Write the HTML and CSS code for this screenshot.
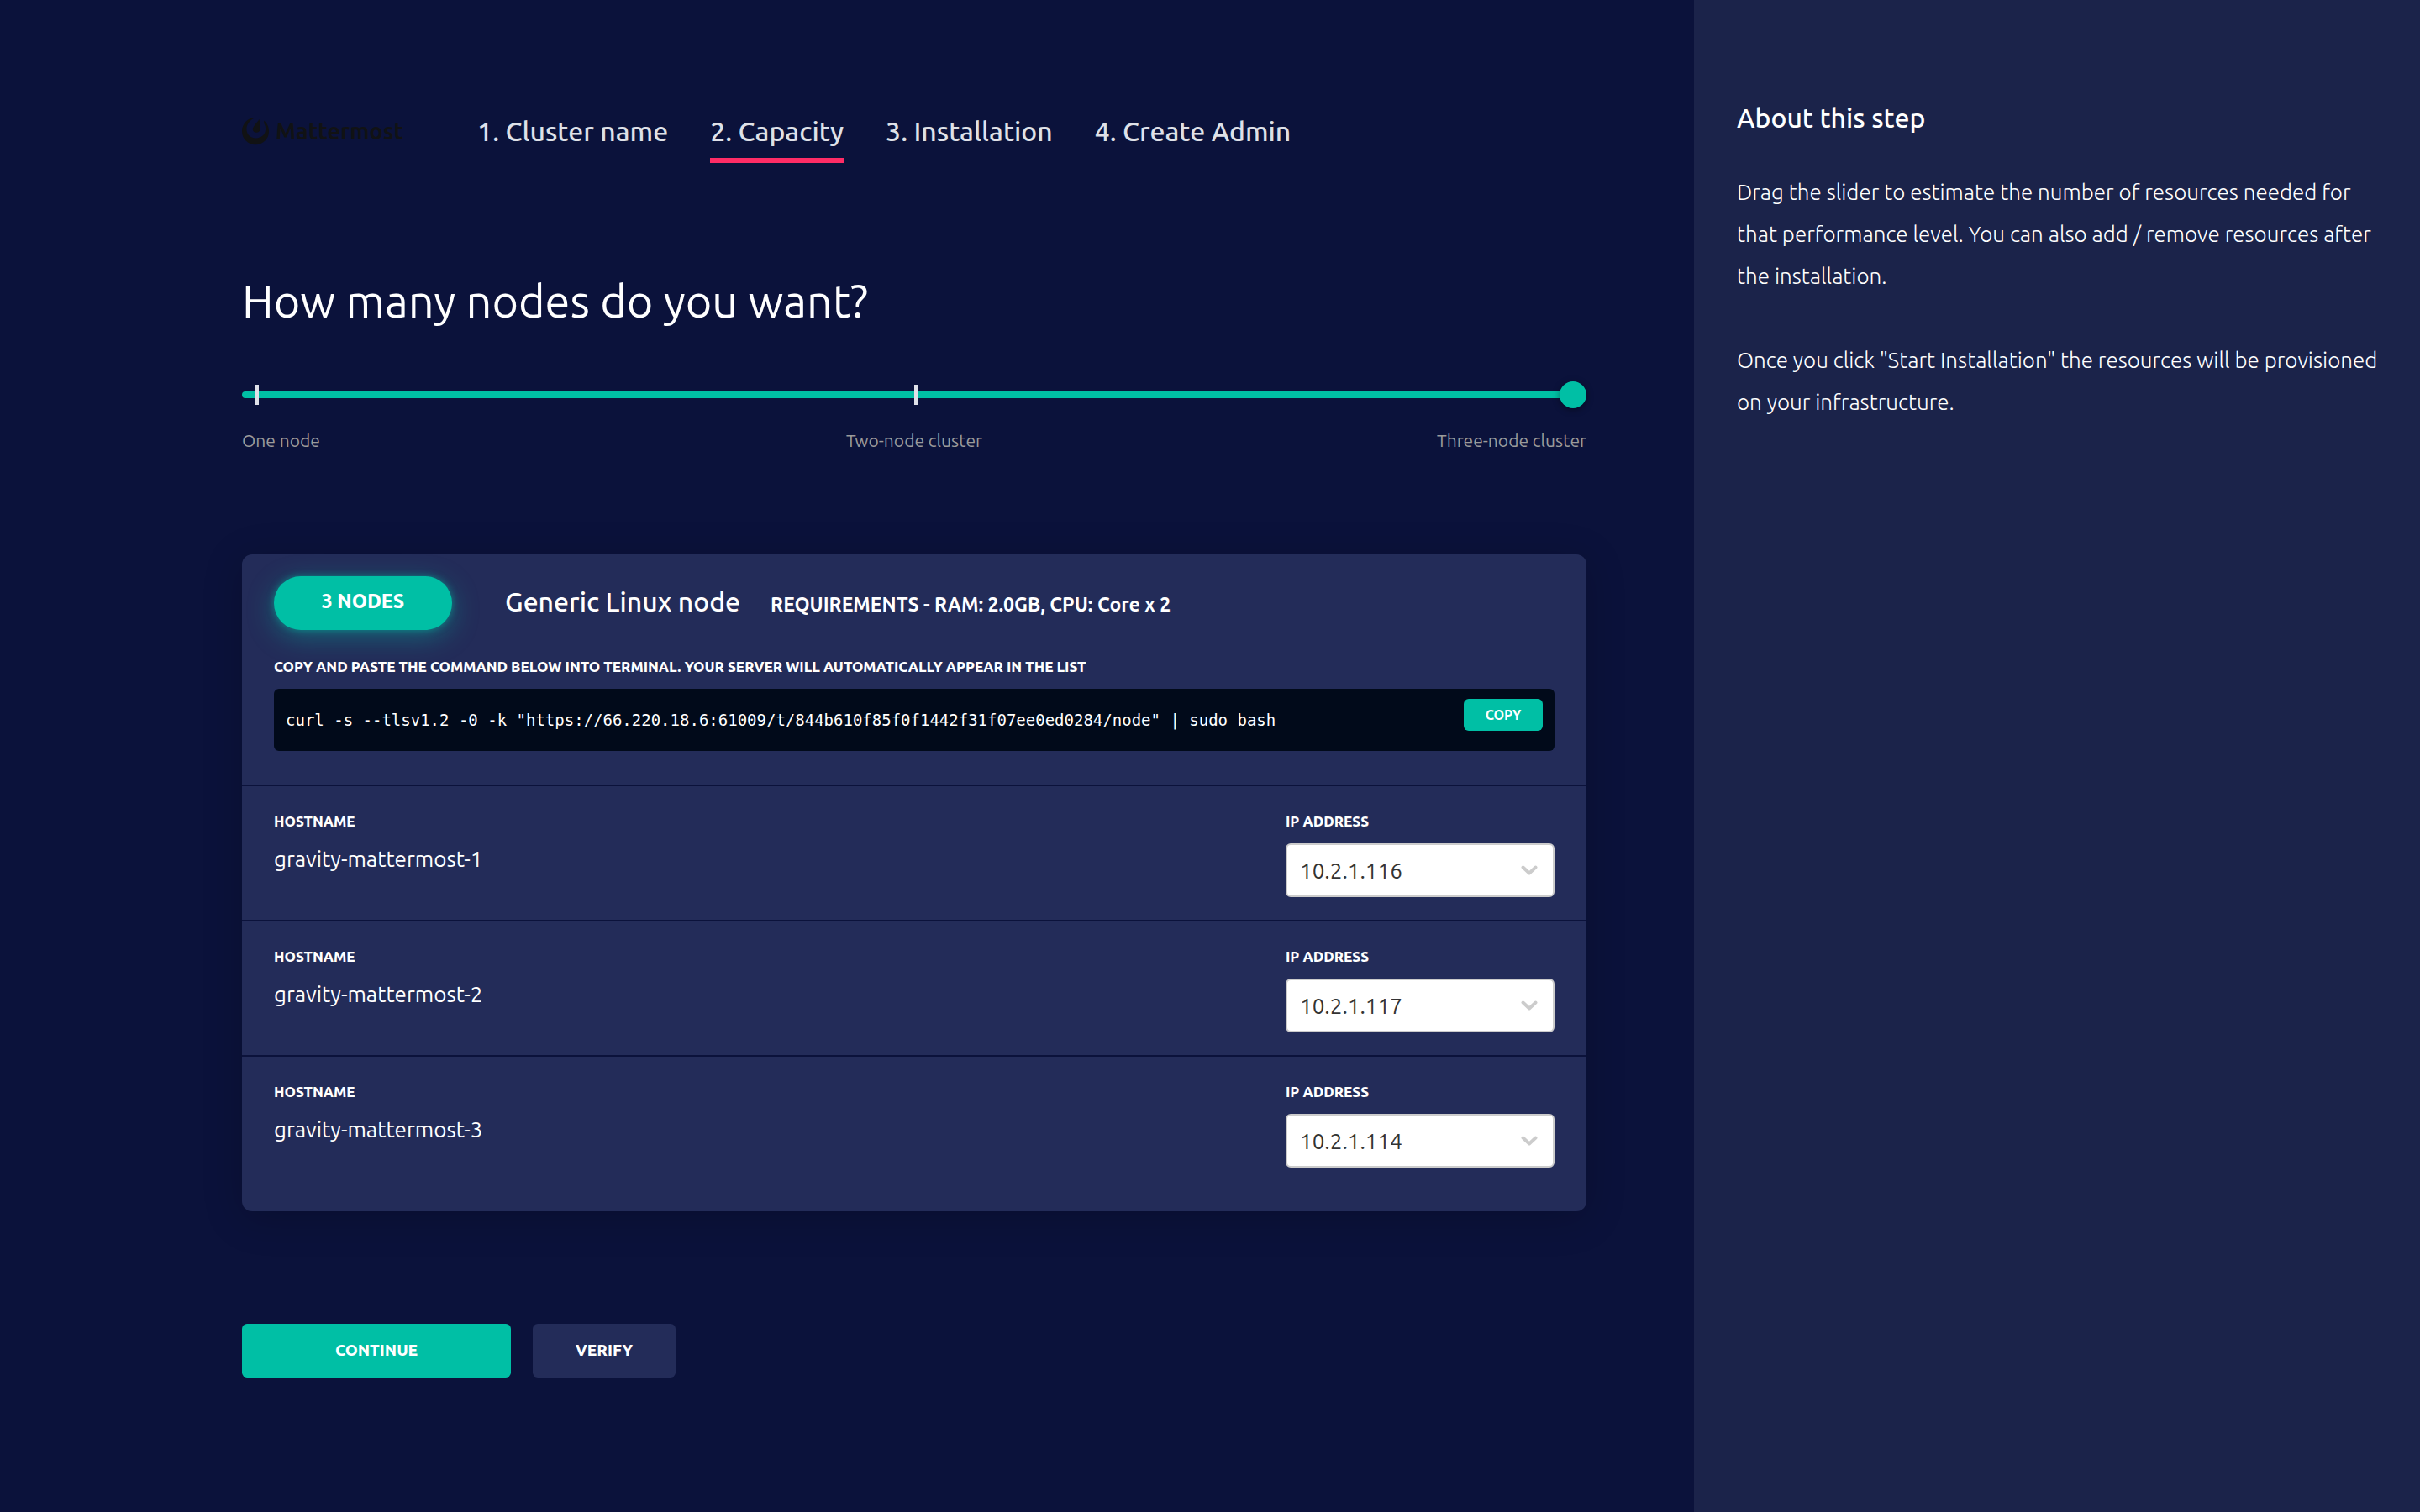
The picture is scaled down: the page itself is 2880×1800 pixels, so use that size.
FILE: index.html
```html
<!DOCTYPE html>
<html lang="en">
<head>
<meta charset="utf-8">
<meta name="viewport" content="width=device-width, initial-scale=1">
<title>Mattermost Installer - Capacity</title>
<link rel="stylesheet" href="styles.css">
</head>
<body>
<div class="layout">
  <main class="main">
    <header class="header">
      <div class="logo">
        <svg class="logo-mark" viewBox="0 0 32 34" aria-hidden="true">
          <path d="M16 .8C7 1.400 0 8.400 0 17c0 9.400 7.200 16.200 16 16.200S32 26.400 32 17.200c0-5.200-2.100-9.800-6-12.800l.5 4.200c1.200 1.900 1.700 3.900 1.600 6.200-.2 6.600-5.500 10.800-11.900 10.600C9.800 25.200 5.200 20.600 5.400 14.400 5.600 8.800 9.800 3.600 16 .8z"/>
          <path d="M20.600 3c-2.600 3.800-7.600 8.600-7.800 11.800-.1 2.200 1.600 3.900 4.200 4 2.700.1 4.700-1.600 4.700-4.200 0-3-.5-7.800-1.100-11.600z"/>
        </svg>
        <span class="logo-text">Mattermost</span>
      </div>
      <nav class="steps" aria-label="Installation steps">
        <a class="step" href="#cluster-name">1. Cluster name</a>
        <a class="step step-active" href="#capacity" aria-current="step">2. Capacity</a>
        <a class="step" href="#installation">3. Installation</a>
        <a class="step" href="#create-admin">4. Create Admin</a>
      </nav>
    </header>

    <h1 class="title"><label for="nodes">How many nodes do you want?</label></h1>

    <div class="slider">
      <input class="slider-input" id="nodes" type="range" min="1" max="3" step="1" value="3">
      <span class="tick tick-first"></span>
      <span class="tick tick-middle"></span>
    </div>
    <div class="slider-labels">
      <span>One node</span>
      <span>Two-node cluster</span>
      <span>Three-node cluster</span>
    </div>

    <section class="card">
      <div class="card-head">
        <div class="profile">
          <span class="badge">3 NODES</span>
          <div class="profile-text">
            <h2 class="profile-name">Generic Linux node</h2>
            <span class="requirements">REQUIREMENTS - RAM: 2.0GB, CPU: Core x 2</span>
          </div>
        </div>
        <p class="caption">COPY AND PASTE THE COMMAND BELOW INTO TERMINAL. YOUR SERVER WILL AUTOMATICALLY APPEAR IN THE LIST</p>
        <div class="command">
          <code class="command-text">curl -s --tlsv1.2 -0 -k "https://66.220.18.6:61009/t/844b610f85f0f1442f31f07ee0ed0284/node" | sudo bash</code>
          <button class="copy" type="button">COPY</button>
        </div>
      </div>
      <ul class="servers">
        <li class="server">
          <div class="field">
            <span class="caption">HOSTNAME</span>
            <span class="hostname">gravity-mattermost-1</span>
          </div>
          <div class="field field-ip">
            <label class="caption" for="ip-1">IP ADDRESS</label>
            <div class="select-box">
              <select class="select" id="ip-1"><option>10.2.1.116</option></select>
              <svg class="chevron" viewBox="0 0 20 13" aria-hidden="true"><path d="M2.500 2.500 10 9.500l7.500-7"/></svg>
            </div>
          </div>
        </li>
        <li class="server">
          <div class="field">
            <span class="caption">HOSTNAME</span>
            <span class="hostname">gravity-mattermost-2</span>
          </div>
          <div class="field field-ip">
            <label class="caption" for="ip-2">IP ADDRESS</label>
            <div class="select-box">
              <select class="select" id="ip-2"><option>10.2.1.117</option></select>
              <svg class="chevron" viewBox="0 0 20 13" aria-hidden="true"><path d="M2.500 2.500 10 9.500l7.500-7"/></svg>
            </div>
          </div>
        </li>
        <li class="server">
          <div class="field">
            <span class="caption">HOSTNAME</span>
            <span class="hostname">gravity-mattermost-3</span>
          </div>
          <div class="field field-ip">
            <label class="caption" for="ip-3">IP ADDRESS</label>
            <div class="select-box">
              <select class="select" id="ip-3"><option>10.2.1.114</option></select>
              <svg class="chevron" viewBox="0 0 20 13" aria-hidden="true"><path d="M2.500 2.500 10 9.500l7.500-7"/></svg>
            </div>
          </div>
        </li>
      </ul>
    </section>

    <div class="actions">
      <button class="button button-primary" type="button">CONTINUE</button>
      <button class="button button-secondary" type="button">VERIFY</button>
    </div>
  </main>

  <aside class="sidebar">
    <h2 class="sidebar-title">About this step</h2>
    <p class="sidebar-text">Drag the slider to estimate the number of resources needed for that performance level. You can also add / remove resources after the installation.</p>
    <p class="sidebar-text">Once you click "Start Installation" the resources will be provisioned on your infrastructure.</p>
  </aside>
</div>
</body>
</html>
```
FILE: styles.css
```css
:root {
  --bg: #0b123b;
  --side: #1b234a;
  --panel: #232c59;
  --accent: #00bfa5;
  --pink: #ff2c66;
}

* {
  box-sizing: border-box;
  margin: 0;
  padding: 0;
}

body {
  background: var(--bg);
  color: #fff;
  font-family: Ubuntu, "Noto Sans", sans-serif;
  font-size: 26px;
}

button,
select {
  font-family: inherit;
  cursor: pointer;
}

.layout {
  display: grid;
  grid-template-columns: 7fr 3fr;
  min-height: 100vh;
}

.main {
  min-width: 0;
  padding: 134px 128px 64px 10vw;
}

/* Header */

.header {
  display: flex;
  align-items: flex-start;
  gap: 88px;
}

.logo {
  display: flex;
  align-items: center;
  gap: 8px;
  height: 44px;
  color: #111214;
}

.logo-mark {
  width: 32px;
  height: 34px;
  fill: currentColor;
}

.logo-text {
  font-size: 27px;
  font-weight: 700;
  line-height: 44px;
}

.steps {
  display: flex;
  gap: 50px;
}

.step {
  padding-bottom: 10px;
  border-bottom: 6px solid transparent;
  color: #dfe1e8;
  font-size: 32px;
  font-weight: 500;
  line-height: 44px;
  text-decoration: none;
}

.step-active {
  border-color: var(--pink);
}

.title {
  margin-top: 128px;
  font-size: 54px;
  font-weight: 400;
  line-height: 72px;
}

/* Slider */

.slider {
  position: relative;
  height: 32px;
  margin-top: 60px;
}

.slider-input {
  display: block;
  width: 100%;
  height: 32px;
  appearance: none;
  background: transparent;
}

.slider-input::-webkit-slider-runnable-track {
  height: 8px;
  border-radius: 4px;
  background: var(--accent);
}

.slider-input::-webkit-slider-thumb {
  width: 32px;
  height: 32px;
  margin-top: -12px;
  appearance: none;
  border-radius: 50%;
  background: var(--accent);
  box-shadow: 0 2px 8px rgba(0, 0, 0, 0.4);
}

.tick {
  position: absolute;
  top: 4px;
  width: 4px;
  height: 24px;
  background: #dfe1e8;
  pointer-events: none;
}

.tick-first {
  left: 16px;
}

.tick-middle {
  left: 50%;
}

.slider-labels {
  display: grid;
  grid-template-columns: repeat(3, 1fr);
  margin-top: 24px;
  color: #9b9b9b;
  font-size: 21px;
  line-height: 28px;
}

.slider-labels :nth-child(2) {
  text-align: center;
}

.slider-labels :nth-child(3) {
  text-align: right;
}

/* Card */

.card {
  margin-top: 122px;
  border-radius: 12px;
  background: var(--panel);
  box-shadow: 0 8px 48px rgba(0, 0, 0, 0.2);
}

.card-head {
  padding: 26px 38px 40px;
}

.profile {
  display: flex;
  align-items: center;
  gap: 63px;
  margin-bottom: 32px;
}

.badge {
  min-width: 212px;
  padding-bottom: 4px;
  border-radius: 32px;
  background: var(--accent);
  box-shadow: 0 0 8px rgba(0, 191, 165, 0.5), 0 8px 32px rgba(0, 191, 165, 0.4);
  font-size: 23px;
  font-weight: 800;
  line-height: 60px;
  text-align: center;
}

.profile-text {
  display: flex;
  align-items: baseline;
  gap: 36px;
  padding-bottom: 4px;
}

.profile-name {
  font-size: 32px;
  font-weight: 500;
  line-height: 44px;
}

.requirements {
  font-size: 23px;
  font-weight: 700;
}

.caption {
  font-size: 17px;
  font-weight: 800;
  line-height: 24px;
}

.command {
  display: flex;
  align-items: center;
  justify-content: space-between;
  min-height: 74px;
  margin-top: 14px;
  padding: 12px 14px;
  border-radius: 6px;
  background: #010a1a;
}

.command-text {
  font-family: "DejaVu Sans Mono", monospace;
  font-size: 19px;
}

.copy {
  align-self: flex-start;
  width: 94px;
  height: 38px;
  border: 0;
  border-radius: 6px;
  background: var(--accent);
  color: #fff;
  font-size: 16px;
  font-weight: 700;
}

/* Servers */

.servers {
  list-style: none;
}

.server {
  display: flex;
  justify-content: space-between;
  padding: 30px 38px 27px;
  border-top: 2px solid var(--bg);
}

.server:last-child {
  padding-bottom: 52px;
}

.field {
  display: flex;
  flex-direction: column;
  gap: 14px;
}

.field-ip {
  width: 320px;
}

.hostname {
  font-weight: 450;
  line-height: 38px;
}

.select-box {
  position: relative;
}

.select {
  display: block;
  width: 100%;
  height: 64px;
  padding: 0 48px 0 15px;
  border: 2px solid #ccc;
  border-radius: 6px;
  appearance: none;
  background: #fff;
  color: #333;
  font-size: 26px;
  font-weight: 450;
}

.chevron {
  position: absolute;
  top: 26px;
  right: 20px;
  width: 20px;
  height: 13px;
  fill: none;
  stroke: #ccc;
  stroke-width: 4;
  stroke-linecap: round;
  stroke-linejoin: round;
  pointer-events: none;
}

/* Actions */

.actions {
  display: flex;
  gap: 26px;
  margin-top: 134px;
}

.button {
  height: 64px;
  padding-bottom: 2px;
  border: 0;
  border-radius: 6px;
  color: #fff;
  font-size: 19px;
  font-weight: 800;
}

.button-primary {
  width: 320px;
  background: var(--accent);
}

.button-secondary {
  width: 170px;
  background: var(--panel);
}

/* Sidebar */

.sidebar {
  padding: 118px 40px 64px 51px;
  background: var(--side);
}

.sidebar-title {
  margin-bottom: 42px;
  font-size: 32px;
  font-weight: 500;
  line-height: 44px;
}

.sidebar-text {
  font-weight: 350;
  line-height: 50px;
}

.sidebar-text + .sidebar-text {
  margin-top: 50px;
}
```
